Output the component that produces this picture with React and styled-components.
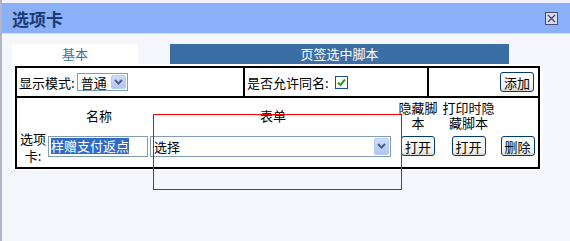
import React from 'react'
import styled, { createGlobalStyle } from 'styled-components'

const GlobalStyle = createGlobalStyle`
  html, body { margin: 0; padding: 0; background: #f5f6fb; }
  body { font-family: "Noto Sans CJK SC", "DejaVu Sans", sans-serif; font-size: 13px; color: #000; }
`

const Dialog = styled.div`
  width: 570px;
  height: 241px;
  box-sizing: border-box;
  border-left: 2px solid #b4b4c4;
  background: #f5f6fb;
  display: flex;
  flex-direction: column;
  overflow: hidden;
  position: relative;
`

const TopStrip = styled.div`
  height: 3px;
  background: #f2f3f9;
`

const TitleBar = styled.div`
  height: 30px;
  background: #89b0f8;
  border-bottom: 1px solid #e6e2b4;
  display: flex;
  align-items: center;
  justify-content: space-between;
  padding: 0 12px 0 10px;
`

const Title = styled.h1`
  margin: 0;
  font-size: 17px;
  font-weight: bold;
  color: #1c3a74;
`

const Body = styled.div`
  padding: 10px 0 0 10px;
  display: flex;
  flex-direction: column;
`

const Tabs = styled.div`
  display: flex;
  gap: 32px;
  height: 20px;
`

const Tab = styled.div`
  width: ${p => p.w}px;
  background: ${p => (p.active ? '#ffffff' : '#3a6ea5')};
  color: ${p => (p.active ? '#3a6ea5' : '#ffffff')};
  display: flex;
  align-items: center;
  justify-content: center;
  font-size: 13px;
  padding-bottom: 2px;
  box-sizing: border-box;
`

const Panel = styled.div`
  width: 531px;
  background: #fff;
  padding: 2px 3px 1px 3px;
  box-sizing: border-box;
`

const Grid = styled.table`
  width: 525px;
  border-collapse: collapse;
  td {
    border: 2px solid #000;
    padding: 0;
  }
`

const TopCell = styled.td`
  height: 28px;
  width: ${p => p.w}px;
`

const Field = styled.div`
  display: flex;
  align-items: center;
  justify-content: ${p => (p.end ? 'flex-end' : 'flex-start')};
  gap: 2px;
  padding: 0 ${p => (p.end ? 4 : 2)}px 0 2px;
`

const Inner = styled.div`
  display: grid;
  grid-template-columns: 31px 102px 246px 44px 57px 1fr;
  grid-template-rows: 35px 26px;
  padding: 0 0 8px 0;
`

const Head = styled.div`
  display: flex;
  flex-direction: column;
  align-items: center;
  justify-content: center;
  text-align: center;
  line-height: 15px;
  padding-top: ${p => p.top || 0}px;
  align-self: ${p => (p.top ? 'start' : 'center')};
`

const Cell = styled.div`
  display: flex;
  align-items: center;
  justify-content: ${p => (p.center ? 'center' : 'flex-start')};
`

const RowLabel = styled.div`
  width: 28px;
  text-align: center;
  line-height: 17px;
  padding-left: 2px;
  margin-top: 2px;
`

const Select = styled.div`
  width: ${p => p.w}px;
  height: ${p => p.h}px;
  box-sizing: border-box;
  border: 1px solid #7f9db9;
  background: #fff;
  display: flex;
  align-items: center;
  justify-content: space-between;
  padding: 0 1px 0 3px;
  font-size: 13px;
`

const Arrow = styled.span`
  width: 15px;
  height: ${p => p.h || 15}px;
  border-radius: 2px;
  background: linear-gradient(#cddcfc, #b3c6f4);
  border: 1px solid #b9cbf3;
  box-sizing: border-box;
  display: flex;
  align-items: center;
  justify-content: center;
`

const TextInput = styled.div`
  width: 100px;
  height: 21px;
  box-sizing: border-box;
  border: 1px solid #7f9db9;
  background: #fff;
  display: flex;
  align-items: center;
  padding-left: 2px;
`

const Selected = styled.span`
  background: #316ac5;
  color: #fff;
  line-height: 16px;
`

const Check = styled.span`
  width: 13px;
  height: 13px;
  box-sizing: border-box;
  border: 1px solid #1c5180;
  background: #fff;
  display: inline-flex;
  align-items: center;
  justify-content: center;
  margin-left: 4px;
`

const Button = styled.button`
  width: ${p => p.w || 34}px;
  height: ${p => p.h || 20}px;
  padding: 0;
  border: 1px solid #003c74;
  border-radius: 3px;
  background: linear-gradient(#ffffff, #f0efe9 80%, #d9d7cc);
  font-family: "Noto Sans CJK SC", sans-serif;
  font-size: 13px;
  color: #000;
  line-height: 1;
`

const Marker = styled.div`
  position: absolute;
  z-index: 10;
  left: 151px;
  top: 114px;
  width: 247px;
  height: 74px;
  border: 1px solid #ff0000;
  pointer-events: none;
`

const Chevron = () => (
  <svg width="9" height="6" viewBox="0 0 9 6">
    <path d="M1 1 L4.5 4.5 L8 1" stroke="#4d6185" strokeWidth="2" fill="none" />
  </svg>
)

const CloseIcon = () => (
  <svg width="13" height="13" viewBox="0 0 13 13">
    <rect x="0.5" y="0.5" width="12" height="12" fill="#d6ddf4" stroke="#4c4a6c" />
    <path d="M3 3 L10 10 M10 3 L3 10" stroke="#4c4a6c" strokeWidth="1.4" />
  </svg>
)

const Tick = () => (
  <svg width="9" height="9" viewBox="0 0 9 9">
    <path d="M1 4.5 L3.5 7 L8 1.5" stroke="#21a121" strokeWidth="2" fill="none" />
  </svg>
)

export default function App() {
  return (
    <>
      <GlobalStyle />
      <Dialog>
        <TopStrip />
        <TitleBar>
          <Title>选项卡</Title>
          <CloseIcon />
        </TitleBar>
        <Body>
          <Tabs>
            <Tab w={126} active>基本</Tab>
            <Tab w={339}>页签选中脚本</Tab>
          </Tabs>
          <Panel>
            <Grid>
              <tbody>
                <tr>
                  <TopCell w={226}>
                    <Field>
                      <span>显示模式:</span>
                      <Select w={51} h={18}>
                        <span>普通</span>
                        <Arrow h={14}><Chevron /></Arrow>
                      </Select>
                    </Field>
                  </TopCell>
                  <TopCell w={182}>
                    <Field>
                      <span>是否允许同名:</span>
                      <Check><Tick /></Check>
                    </Field>
                  </TopCell>
                  <TopCell>
                    <Field end>
                      <Button w={34} h={20}>添加</Button>
                    </Field>
                  </TopCell>
                </tr>
                <tr>
                  <td colSpan={3}>
                    <Inner>
                      <div />
                      <Head>名称</Head>
                      <Head>表单</Head>
                      <Head top={2}><span>隐藏脚</span><span>本</span></Head>
                      <Head top={2}><span>打印时隐</span><span>藏脚本</span></Head>
                      <div />
                      <Cell><RowLabel>选项卡:</RowLabel></Cell>
                      <Cell><TextInput><Selected>样赠支付返点</Selected></TextInput></Cell>
                      <Cell>
                        <Select w={241} h={21}>
                          <span>选择</span>
                          <Arrow h={17}><Chevron /></Arrow>
                        </Select>
                      </Cell>
                      <Cell center><Button w={34} h={20}>打开</Button></Cell>
                      <Cell center><Button w={34} h={20}>打开</Button></Cell>
                      <Cell center><Button w={34} h={20}>删除</Button></Cell>
                    </Inner>
                  </td>
                </tr>
              </tbody>
            </Grid>
          </Panel>
        </Body>
        <Marker />
      </Dialog>
    </>
  )
}
